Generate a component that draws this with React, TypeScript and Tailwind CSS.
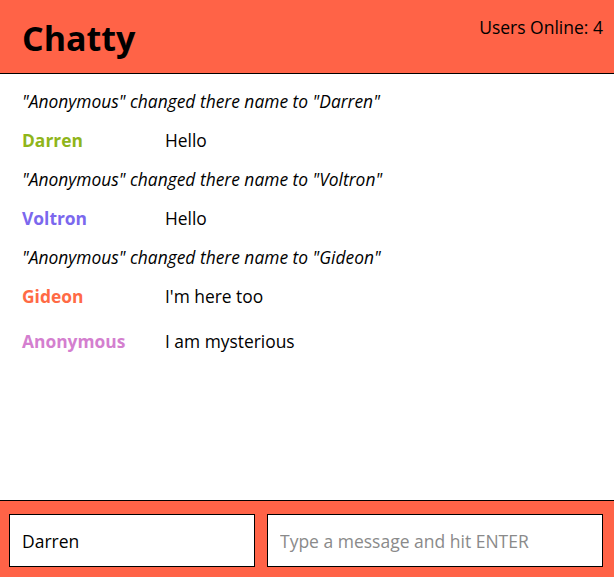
import React from "react";

type Item =
  | { kind: "system"; text: string }
  | { kind: "message"; username: string; color: string; content: string };

const items: Item[] = [
  { kind: "system", text: '"Anonymous" changed there name to "Darren"' },
  { kind: "message", username: "Darren", color: "text-[#8fb51a]", content: "Hello" },
  { kind: "system", text: '"Anonymous" changed there name to "Voltron"' },
  { kind: "message", username: "Voltron", color: "text-[#7b68ee]", content: "Hello" },
  { kind: "system", text: '"Anonymous" changed there name to "Gideon"' },
  { kind: "message", username: "Gideon", color: "text-[#ff6a45]", content: "I'm here too" },
  { kind: "message", username: "Anonymous", color: "text-[#d47fcf]", content: "I am mysterious" },
];

const App: React.FC = () => {
  return (
    <div className="h-screen flex flex-col bg-white text-black font-['Open_Sans',sans-serif]">
      <nav className="h-[74px] shrink-0 bg-[#ff6347] border-b border-black flex justify-between pl-[22px] pr-[11px]">
        <a className="text-[34px] font-bold leading-none pt-[21px]">Chatty</a>
        <span className="text-[17.5px] pt-[14px]">Users Online: 4</span>
      </nav>

      <main className="flex-1 pt-[11px] px-[22px] text-[17.4px]">
        {items.map((item, i) =>
          item.kind === "system" ? (
            <div key={i} className="h-[33px] flex items-center italic">
              {item.text}
            </div>
          ) : (
            <div key={i} className="h-[45px] flex items-center">
              <span className={`w-[143px] font-bold ${item.color}`}>
                {item.username}
              </span>
              <span>{item.content}</span>
            </div>
          )
        )}
      </main>

      <footer className="h-[77px] shrink-0 bg-[#ff6347] border-t border-black flex items-start pt-[13px] pl-[9px] gap-[12px]">
        <input
          className="w-[246px] h-[53px] bg-white border border-black px-[12px] text-[17.5px] outline-none"
          defaultValue="Darren"
        />
        <input
          className="w-[336px] h-[53px] bg-white border border-black px-[12px] text-[17.5px] outline-none placeholder:text-[#8a8a8a]"
          placeholder="Type a message and hit ENTER"
        />
      </footer>
    </div>
  );
};

export default App;
